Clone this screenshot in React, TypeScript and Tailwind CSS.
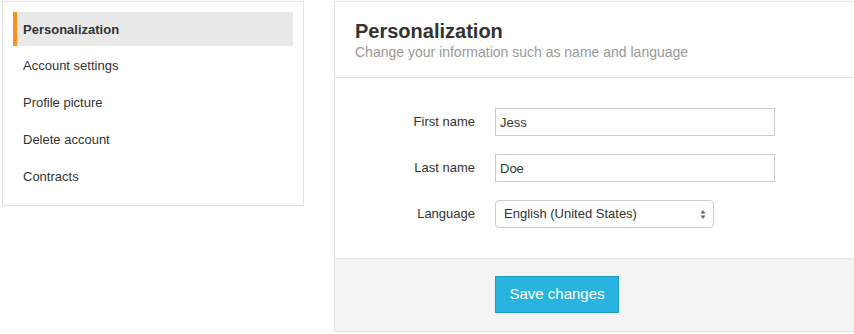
const menu = [
  "Personalization",
  "Account settings",
  "Profile picture",
  "Delete account",
  "Contracts",
];

function Field({ label, value }: { label: string; value: string }) {
  return (
    <div className="flex items-center">
      <label className="w-[160px] pr-[20px] text-right text-[13px] text-[#333]">{label}</label>
      <input
        readOnly
        value={value}
        className="h-[28px] w-[280px] border border-[#ccc] bg-white px-[4px] text-[13px] text-[#333] outline-none"
      />
    </div>
  );
}

export default function App() {
  return (
    <div className="flex h-[334px] w-[854px] gap-[30px] overflow-hidden bg-white pl-[2px] pt-px font-['Liberation_Sans',Arial,sans-serif] text-[#333]">
      <aside className="h-[205px] w-[302px] shrink-0 border border-[#e3e3e3] px-[10px] py-[10px]">
        <ul className="flex flex-col gap-[3px]">
          {menu.map((item, i) => (
            <li
              key={item}
              className={
                i === 0
                  ? "flex h-[34px] items-center border-l-4 border-[#f7941d] bg-[#e9e9e9] pl-[6px] pt-px text-[13px] font-bold"
                  : "flex h-[34px] items-center pl-[10px] text-[13px]"
              }
            >
              {item}
            </li>
          ))}
        </ul>
      </aside>

      <section className="flex h-[331px] flex-1 flex-col border border-r-0 border-[#e3e3e3]">
        <header className="h-[76px] border-b border-[#e3e3e3] pl-[20px] pt-[17px]">
          <h1 className="text-[20px] font-bold leading-[24px] text-[#333]">Personalization</h1>
          <p className="text-[14px] leading-[19px] text-[#999]">Change your information such as name and language</p>
        </header>

        <div className="flex h-[180px] flex-col gap-[18px] pt-[30px]">
          <Field label="First name" value="Jess" />
          <Field label="Last name" value="Doe" />
          <div className="flex items-center">
            <label className="w-[160px] pr-[20px] text-right text-[13px] text-[#333]">Language</label>
            <div className="flex h-[28px] w-[219px] items-center justify-between rounded-[4px] border border-[#ccc] bg-white pl-[8px] pr-[7px] text-[13px] text-[#333]">
              <span>English (United States)</span>
              <svg width="6" height="11" viewBox="0 0 6 11" className="text-[#666]">
                <path d="M3 1 L5.5 4.5 H0.5 Z" fill="currentColor" />
                <path d="M3 10 L5.5 6.5 H0.5 Z" fill="currentColor" />
              </svg>
            </div>
          </div>
        </div>

        <footer className="flex-1 border-t border-[#e3e3e3] bg-[#f4f4f4] pl-[160px] pt-[17px]">
          <button className="h-[37px] w-[124px] border border-[#1f9ac6] bg-[#29b4df] text-[15px] text-white">
            Save changes
          </button>
        </footer>
      </section>
    </div>
  );
}
